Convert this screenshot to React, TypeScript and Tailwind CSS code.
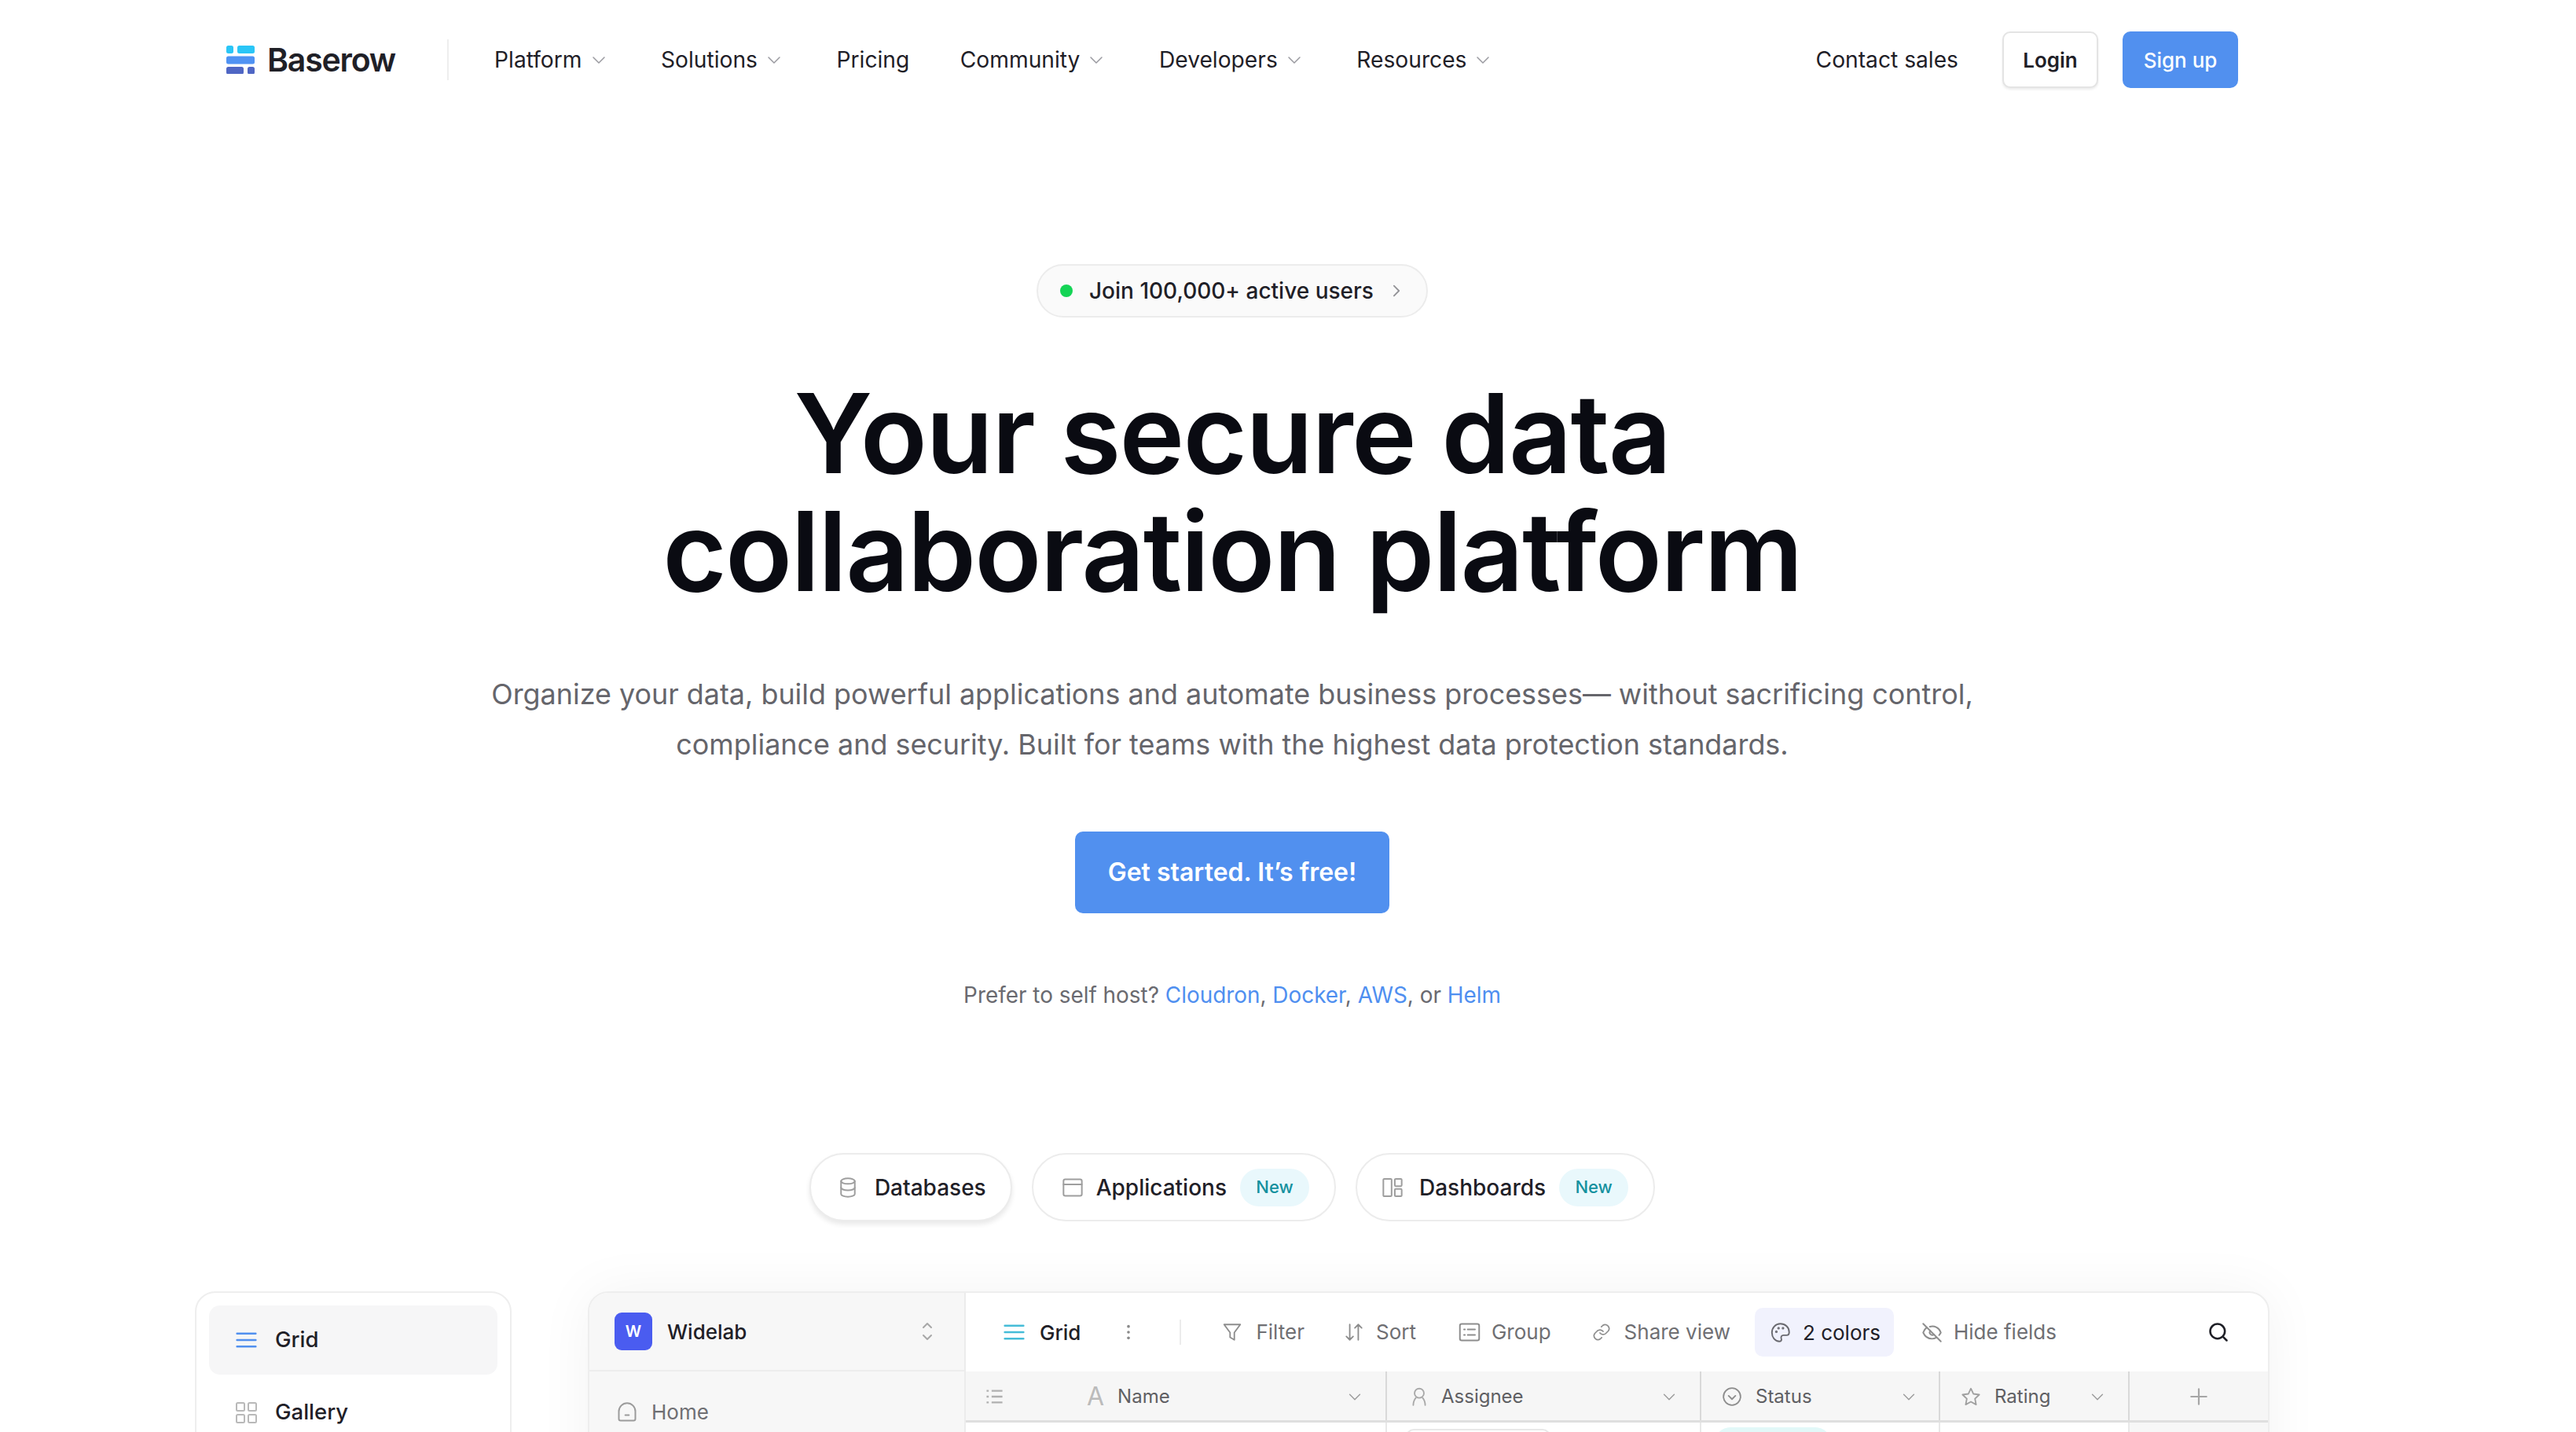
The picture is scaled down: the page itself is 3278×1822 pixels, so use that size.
import React from "react";

const Chevron = ({ className = "" }: { className?: string }) => (
  <svg viewBox="0 0 24 24" fill="none" stroke="currentColor" strokeWidth="1.5" strokeLinecap="round" strokeLinejoin="round" className={className}>
    <path d="M5 9l7 7 7-7" />
  </svg>
);

const Logo = () => (
  <svg viewBox="0 0 36 36" className="w-[36px] h-[36px]">
    <rect x="0" y="0" width="9" height="10" rx="2.5" fill="#2ac6f7" />
    <rect x="14" y="0" width="22" height="10" rx="2.5" fill="#2ac6f7" />
    <rect x="0" y="13.5" width="36" height="10" rx="2.5" fill="#4f92f3" />
    <rect x="0" y="27" width="22" height="9.5" rx="2.5" fill="#4f66c4" />
    <rect x="27" y="27" width="9" height="9.5" rx="2.5" fill="#4f66c4" />
  </svg>
);

const NavItem = ({ label, menu = true }: { label: string; menu?: boolean }) => (
  <div className="flex items-center gap-[9px] text-[28.2px] leading-[40px] text-[#1f2027]">
    <span>{label}</span>
    {menu && <Chevron className="w-[24px] h-[24px] text-[#9a9aa0] mr-[3px]" />}
  </div>
);

const Ic = ({ children, className = "" }: { children: React.ReactNode; className?: string }) => (
  <svg viewBox="0 0 24 24" fill="none" stroke="currentColor" strokeWidth="1.7" strokeLinecap="round" strokeLinejoin="round" className={className}>
    {children}
  </svg>
);

const ListLines = ({ className = "" }: { className?: string }) => (
  <svg viewBox="0 0 28 24" fill="none" stroke="currentColor" strokeWidth="2.6" strokeLinecap="round" className={className}>
    <path d="M1 3h26M1 12h26M1 21h26" />
  </svg>
);

const Tab = ({ icon, label, badge, active }: { icon: React.ReactNode; label: string; badge?: boolean; active?: boolean }) => (
  <div className={`h-[87px] flex items-center rounded-[44px] border-2 border-[#ececec] bg-white pl-[36px] ${badge ? "pr-[32px]" : "pr-[31px]"} ${active ? "shadow-[0_4px_6px_rgba(0,0,0,0.09)]" : ""}`}>
    {icon}
    <span className="ml-[20px] text-[28px] font-medium text-[#1f2027] leading-[40px]">{label}</span>
    {badge && (
      <span className="ml-[17px] h-[48px] w-[88px] rounded-[24px] bg-[#e9f8fc] text-[#14919f] text-[22px] font-medium flex items-center justify-center">New</span>
    )}
  </div>
);

const ToolItem = ({ icon, label, className = "" }: { icon: React.ReactNode; label: string; className?: string }) => (
  <div className={`flex items-center text-[26px] text-[#6f6f73] leading-[36px] ${className}`}>
    {icon}
    <span>{label}</span>
  </div>
);

const ColHead = ({ icon, label, className = "" }: { icon: React.ReactNode; label: string; className?: string }) => (
  <div className={`h-full flex items-center pt-[2px] border-r-2 border-[#d9d9d9] text-[24px] text-[#5f5f63] ${className}`}>
    {icon}
    <span className="flex-1">{label}</span>
    <Chevron className="w-[22px] h-[22px] text-[#9a9a9a]" />
  </div>
);

export default function App() {
  return (
    <div className="h-[1822px] w-[3136px] overflow-hidden bg-white font-['Inter',sans-serif] [font-variant-ligatures:none] text-[#1f2027]">
      <header className="h-[152px] pl-[288px] pr-[288px] flex items-center">
        <div className="flex items-center gap-[16px]">
          <Logo />
          <span className="text-[41px] font-semibold tracking-[-1.2px] text-[#1f2027] leading-[50px]">Baserow</span>
        </div>
        <div className="w-[2px] h-[52px] bg-[#eeeeee] ml-[66px] mr-[58px]" />
        <nav className="flex items-center gap-[64.5px]">
          <NavItem label="Platform" />
          <NavItem label="Solutions" />
          <NavItem label="Pricing" menu={false} />
          <NavItem label="Community" />
          <NavItem label="Developers" />
          <NavItem label="Resources" />
        </nav>
        <div className="ml-auto flex items-center">
          <span className="text-[28.2px] text-[#1f2027]">Contact sales</span>
          <button className="ml-[56px] w-[122px] h-[72px] rounded-[10px] border-2 border-[#e4e4e4] bg-white shadow-[0_2px_3px_rgba(0,0,0,0.08)] text-[26px] font-semibold text-[#1f2027]">Login</button>
          <button className="ml-[31px] w-[147px] h-[72px] rounded-[10px] bg-[#5190ef] text-[26px] font-medium text-white">Sign up</button>
        </div>
      </header>

      <main className="flex flex-col items-center">
        <div className="mt-[184px] h-[68px] w-[498px] rounded-[34px] border-2 border-[#ececec] bg-[#fafafa] flex items-center pl-[28px]">
          <span className="w-[16px] h-[16px] rounded-full bg-[#14d455]" />
          <span className="ml-[21px] text-[28px] font-medium text-[#1f2027]">Join 100,000+ active users</span>
          <svg viewBox="0 0 12 20" fill="none" stroke="#929296" strokeWidth="2" strokeLinecap="round" strokeLinejoin="round" className="ml-[24px] w-[11px] h-[18px]"><path d="M2 3l7 7-7 7" /></svg>
        </div>

        <h1 className="mt-[72px] text-center text-[140px] leading-[150px] font-semibold tracking-[-1.8px] text-[#0a0b12]">
          Your secure data
          <br />
          collaboration platform
        </h1>

        <p className="mt-[75px] text-center text-[35.9px] leading-[64px] text-[#65656b]">
          Organize your data, build powerful applications and automate business processes— without sacrificing control,
          <br />
          compliance and security. Built for teams with the highest data protection standards.
        </p>

        <button className="mt-[79px] w-[400px] h-[104px] rounded-[10px] bg-[#5190ef] text-white text-[32px] font-semibold">Get started. It’s free!</button>

        <p className="mt-[84px] text-[27.9px] leading-[40px] text-[#6a6a70]">
          Prefer to self host? <span className="text-[#4f8ff0]">Cloudron</span>, <span className="text-[#4f8ff0]">Docker</span>, <span className="text-[#4f8ff0]">AWS</span>, or <span className="text-[#4f8ff0]">Helm</span>
        </p>

        <div className="mt-[181px] flex gap-[25px]">
          <Tab
            active
            label="Databases"
            icon={<Ic className="w-[28px] h-[28px] ml-[-3px] text-[#9e9e9e]"><ellipse cx="12" cy="5" rx="7.5" ry="3" /><path d="M4.5 5v14c0 1.7 3.4 3 7.5 3s7.5-1.3 7.5-3V5" /><path d="M4.500 12c0 1.700 3.400 3 7.500 3s7.500-1.300 7.500-3" /></Ic>}
          />
          <Tab
            badge
            label="Applications"
            icon={<Ic className="w-[28px] h-[28px] mr-[-4px] text-[#9e9e9e]"><rect x="2" y="3" width="20" height="18" rx="2" /><path d="M2 8.5h20" /></Ic>}
          />
          <Tab
            badge
            label="Dashboards"
            icon={<Ic className="w-[28px] h-[28px] ml-[-5px] text-[#9e9e9e]"><rect x="2" y="2.5" width="9" height="19" rx="1" /><rect x="14.5" y="2.5" width="7.5" height="8" rx="1" /><rect x="14.5" y="13.5" width="7.5" height="8" rx="1" /></Ic>}
          />
        </div>

        <div className="mt-[89px] w-[2640px] flex items-start gap-[97px]">
          {/* left views panel */}
          <div className="w-[403px] h-[300px] shrink-0 rounded-[26px] border-2 border-[#eeeeee] bg-white p-[16px]">
            <div className="h-[88px] rounded-[14px] bg-[#f6f6f7] flex items-center pl-[34px] text-[27.5px] font-medium">
              <ListLines className="w-[27px] h-[22px] text-[#5190ef]" />
              <span className="ml-[23px]">Grid</span>
            </div>
            <div className="mt-[4px] h-[88px] flex items-center pl-[34px] text-[27.5px] font-medium">
              <svg viewBox="0 0 27 27" fill="none" stroke="#b9b9b9" strokeWidth="2" className="w-[27px] h-[27px]">
                <rect x="1" y="1" width="10" height="10" rx="1.5" /><rect x="16" y="1" width="10" height="10" rx="1.5" /><rect x="1" y="16" width="10" height="10" rx="1.5" /><rect x="16" y="16" width="10" height="10" rx="1.5" />
              </svg>
              <span className="ml-[23px]">Gallery</span>
            </div>
          </div>

          {/* main app panel */}
          <div className="flex-1 h-[400px] flex rounded-[26px] border-2 border-[#eeeeee] bg-white shadow-[0_0_70px_rgba(0,0,0,0.05)] overflow-hidden">
            <aside className="w-[479px] shrink-0 bg-[#f7f7f7] border-r-2 border-[#ececec]">
              <div className="h-[100px] border-b-2 border-[#ededed] flex items-center pl-[32px] pr-[40px]">
                <span className="w-[48px] h-[48px] rounded-[9px] bg-[#4a5cf0] text-white text-[20px] font-semibold flex items-center justify-center">W</span>
                <span className="ml-[19px] flex-1 text-[26px] font-medium text-[#1f2027]">Widelab</span>
                <svg viewBox="0 0 14 24" fill="none" stroke="#a8a8a8" strokeWidth="2" strokeLinecap="round" strokeLinejoin="round" className="w-[14px] h-[24px]"><path d="M2 7l5-5 5 5M2 17l5 5 5-5" /></svg>
              </div>
              <div className="flex items-center pl-[34px] pt-[32px] text-[26px] text-[#6f6f73]">
                <Ic className="w-[28px] h-[28px] text-[#9b9b9b]"><path d="M5 21h14a2 2 0 0 0 2-2v-8c0-5-4-9-9-9s-9 4-9 9v8a2 2 0 0 0 2 2z" /><path d="M10 15h4" /></Ic>
                <span className="ml-[17px]">Home</span>
              </div>
            </aside>
            <section className="flex-1 min-w-0">
              <div className="h-[100px] flex items-center pl-[48px]">
                <ListLines className="w-[27px] h-[22px] text-[#45bcd8]" />
                <span className="ml-[19px] text-[26px] font-medium text-[#1f2027]">Grid</span>
                <svg viewBox="0 0 6 24" fill="#8a8a8a" className="ml-[58px] w-[6px] h-[22px]"><circle cx="3" cy="4" r="2" /><circle cx="3" cy="12" r="2" /><circle cx="3" cy="20" r="2" /></svg>
                <div className="ml-[62px] w-[2px] h-[32px] bg-[#ececec]" />
                <ToolItem
                  className="ml-[52px]"
                  label="Filter"
                  icon={<Ic className="w-[26px] h-[26px] text-[#8d8d8d] mr-[17px]"><path d="M2.5 3h19l-7 9.5V21l-5-3v-5.500z" /></Ic>}
                />
                <ToolItem
                  className="ml-[50px]"
                  label="Sort"
                  icon={<Ic className="w-[26px] h-[26px] text-[#8d8d8d] mr-[15px]"><path d="M7 3v18M3 17l4 4 4-4M17 21V3M13 7l4-4 4 4" /></Ic>}
                />
                <ToolItem
                  className="ml-[54px]"
                  label="Group"
                  icon={<Ic className="w-[28px] h-[28px] text-[#8d8d8d] mr-[14px]"><rect x="1.5" y="3" width="21" height="18" rx="2" /><path d="M6 9h1M10 9h8M6 15h1M10 15h8" /></Ic>}
                />
                <ToolItem
                  className="ml-[52px]"
                  label="Share view"
                  icon={<Ic className="w-[24px] h-[24px] text-[#8d8d8d] mr-[17px]"><path d="M10 13a5 5 0 0 0 7.500.5l3-3a5 5 0 0 0-7-7l-1.700 1.700" /><path d="M14 11a5 5 0 0 0-7.500-.5l-3 3a5 5 0 0 0 7 7l1.700-1.700" /></Ic>}
                />
                <div className="ml-[31px] h-[62px] w-[177px] rounded-[10px] bg-[#f1f2fd] flex items-center pl-[19px] text-[26px] text-[#1f2027]">
                  <Ic className="w-[27px] h-[27px] text-[#6a6a70] mr-[15px]"><path d="M12 2C6.500 2 2.500 6.500 2.500 12S6 22 11 22c2.500 0 2.500-2 2-3.500-.5-2 .5-3.500 2.500-3.500H19c1.800 0 3-1.500 3-3.500C22 6 17.500 2 12 2z" /><circle cx="7.500" cy="11" r=".6" /><circle cx="10" cy="7" r=".6" /><circle cx="15" cy="7" r=".6" /></Ic>
                  <span>2 colors</span>
                </div>
                <ToolItem
                  className="ml-[35px]"
                  label="Hide fields"
                  icon={<Ic className="w-[27px] h-[27px] text-[#8d8d8d] mr-[14px]"><path d="M2 2l20 20" /><path d="M9.500 5.300A10 10 0 0 1 22 12c-.5 1-1.200 2-2 2.900M6 6.300C4.200 7.500 2.900 9.600 2 12c2 4.500 5.500 7 10 7 1.800 0 3.400-.5 4.800-1.300" /><path d="M10 10a3 3 0 0 0 4.200 4.200" /></Ic>}
                />
                <Ic className="ml-auto mr-[49px] w-[28px] h-[28px] text-[#1f2027]"><circle cx="11" cy="11" r="8" strokeWidth="2.2" /><path d="M17 17l4 4" strokeWidth="2.2" /></Ic>
              </div>
              <div className="h-[65px] flex items-center bg-[#f6f6f6] border-b-[3px] border-[#dfdfdf]">
                <div className="h-full w-[536px] flex items-center pt-[2px] pl-[25px] pr-[28px] border-r-2 border-[#d9d9d9]">
                  <svg viewBox="0 0 24 24" fill="none" stroke="#b0b0b0" strokeWidth="2.5" className="w-[23px] h-[22px]"><path d="M1 4h3M8 4h15M1 12h3M8 12h15M1 20h3M8 20h15" /></svg>
                  <span className="ml-[106px] text-[32px] leading-none text-[#bbbbbb]">A</span>
                  <span className="ml-[17px] flex-1 text-[24px] text-[#5f5f63]">Name</span>
                  <Chevron className="w-[22px] h-[22px] text-[#9a9a9a]" />
                </div>
                <ColHead
                  className="w-[400px] pl-[28px] pr-[28px]"
                  label="Assignee"
                  icon={<Ic className="w-[26px] h-[26px] text-[#a8a8a8] mr-[15px]"><circle cx="12" cy="8" r="5.500" /><path d="M5 22c0-5 3-8.500 3-8.500M19 22c0-5-3-8.500-3-8.500" /></Ic>}
                />
                <ColHead
                  className="w-[304px] pl-[26px] pr-[27px]"
                  label="Status"
                  icon={<Ic className="w-[26px] h-[26px] text-[#8d8d8d] mr-[17px]"><circle cx="12" cy="12" r="10" /><path d="M8 11l4 4 4-4" /></Ic>}
                />
                <ColHead
                  className="w-[241px] pl-[26px] pr-[28px]"
                  label="Rating"
                  icon={<Ic className="w-[26px] h-[26px] text-[#a0a0a0] mr-[17px]"><path d="M12 2.500l3 6.300 6.800.9-5 4.800 1.300 6.800-6.100-3.300-6.100 3.300 1.300-6.800-5-4.800 6.800-.9z" /></Ic>}
                />
                <div className="flex-1 flex items-center justify-center pt-[2px] text-[#a6a6a6]">
                  <Ic className="w-[26px] h-[26px]"><path d="M12 3v18M3 12h18" strokeWidth="2" /></Ic>
                </div>
              </div>
              <div className="h-[40px] flex">
                <div className="w-[536px] border-r-2 border-[#e8e8e8]" />
                <div className="w-[400px] border-r-2 border-[#e8e8e8] pl-[24px] pt-[8px]"><div className="w-[184px] h-[40px] rounded-[10px] border-2 border-[#e8e8e8]" /></div>
                <div className="w-[304px] border-r-2 border-[#e8e8e8] pl-[17px] pt-[6px]"><div className="w-[148px] h-[40px] rounded-[20px] bg-[#e2f8f8]" /></div>
                <div className="w-[241px] border-r-2 border-[#e8e8e8]" />
                <div className="flex-1 bg-[#f7f7f7]" />
              </div>
            </section>
          </div>
        </div>
      </main>
    </div>
  );
}
